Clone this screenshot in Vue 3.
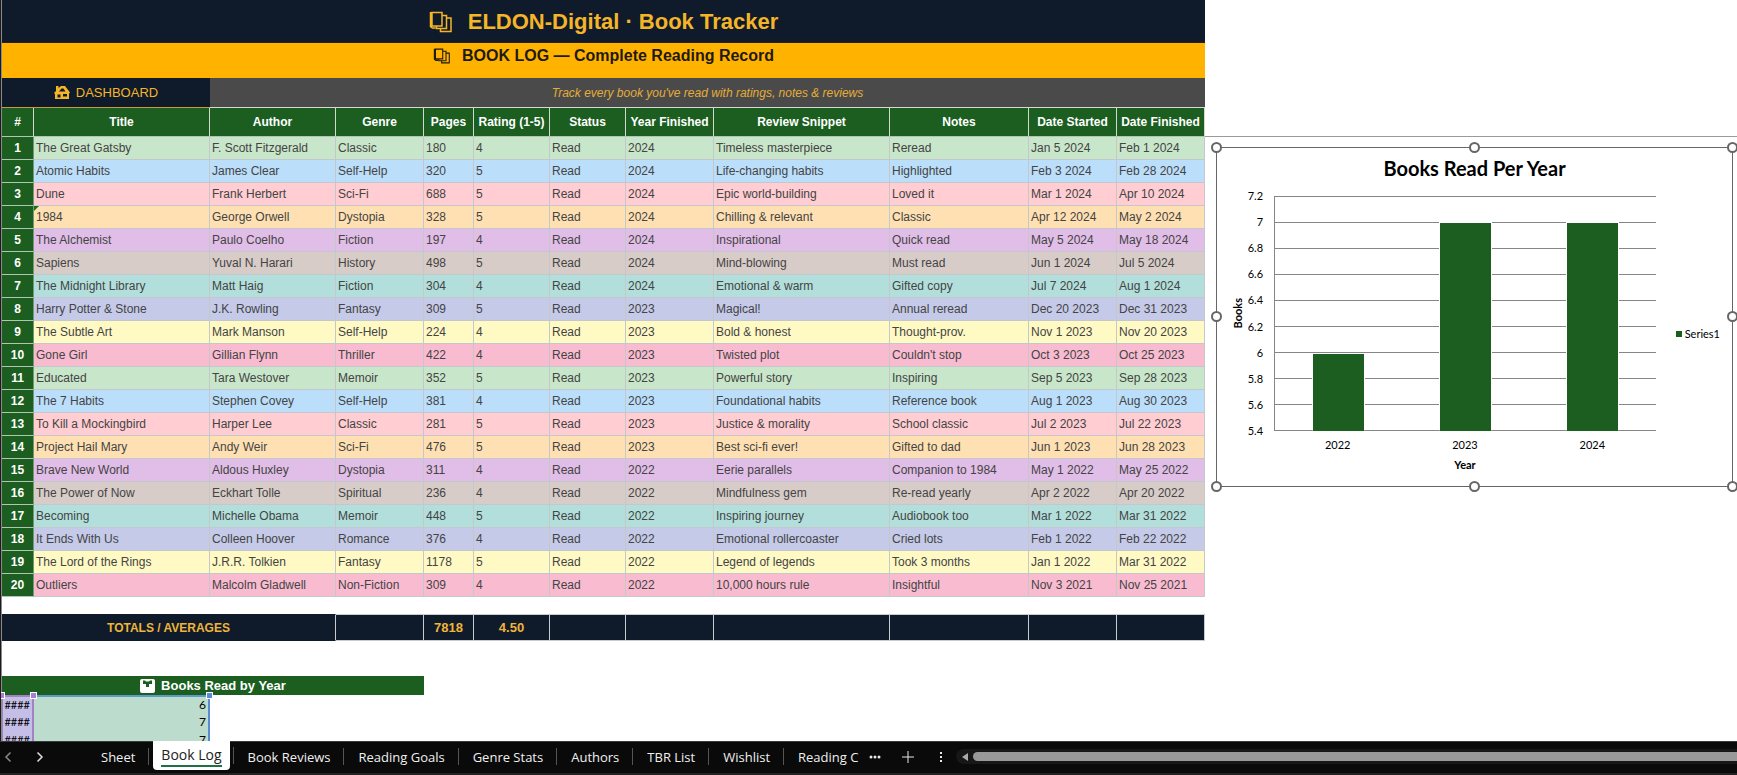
<template>
  <div class="workbook">
    <main class="sheet">
      <table class="log">
        <colgroup>
          <col v-for="c in columns" :key="c.label" :style="{ width: c.width + 'px' }">
        </colgroup>
        <thead>
          <tr class="brand-row">
            <th colspan="12">
              <span class="line">
                <svg class="books" viewBox="0 0 24 22" aria-hidden="true">
                  <path d="M3 1.500h10v13.500H3zM1.500 1v14.500l2 1.500h3M13 4.500h4.500v13h-10V15M17.500 7H22v13.500H11.500v-3" />
                </svg>
                <span>ELDON-Digital · Book Tracker</span>
              </span>
            </th>
          </tr>
          <tr class="heading-row">
            <th colspan="12">
              <span class="line">
                <svg class="books" viewBox="0 0 24 22" aria-hidden="true">
                  <path d="M3 1.500h10v13.500H3zM1.500 1v14.500l2 1.500h3M13 4.500h4.500v13h-10V15M17.500 7H22v13.500H11.500v-3" />
                </svg>
                <span>BOOK LOG — Complete Reading Record</span>
              </span>
            </th>
          </tr>
          <tr class="nav-row">
            <td colspan="2" class="dash">
              <a href="#dashboard" class="line">
                <svg class="house" viewBox="0 0 16 15" aria-hidden="true">
                  <path fill-rule="evenodd" d="M0 8 2 6V1h2.500v2L7 1h4l5 6.500-1 1V14H1V9zM3.500 9.500v3h3v-3zM9 9v2.500h4V9zM7.500 3.500 5 6.500h6.500l-2-3z" />
                </svg>
                <span>DASHBOARD</span>
              </a>
            </td>
            <td colspan="10" class="tagline">Track every book you've read with ratings, notes &amp; reviews</td>
          </tr>
          <tr class="cols-row">
            <th v-for="c in columns" :key="c.label" scope="col">{{ c.label }}</th>
          </tr>
        </thead>
        <tbody>
          <tr v-for="(book, i) in books" :key="i" class="book" :class="'tint-' + (i % 10)">
            <th scope="row">{{ i + 1 }}</th>
            <td v-for="(value, j) in book" :key="j" :class="{ flagged: value === '1984' }">{{ value }}</td>
          </tr>
          <tr class="gap"><td colspan="12"></td></tr>
          <tr class="totals">
            <th colspan="3" scope="row">TOTALS / AVERAGES</th>
            <td></td>
            <td>7818</td>
            <td>4.50</td>
            <td v-for="n in 6" :key="n"></td>
          </tr>
          <tr class="gap wide"><td colspan="12"></td></tr>
          <tr class="year-head">
            <th colspan="4">
              <span class="line">
                <svg class="calendar" viewBox="0 0 15 14" aria-hidden="true">
                  <rect width="15" height="14" rx="2" />
                  <path d="M3 1.500h2l1 1h3l1-1h2V5H9v3H6V5H3z" />
                </svg>
                <span>Books Read by Year</span>
              </span>
            </th>
            <td colspan="8"></td>
          </tr>
          <tr v-for="(y, i) in yearly" :key="y.year" class="year-row" :class="{ first: i === 0 }">
            <td class="key">####<i v-if="i === 0" class="grip start"></i><i v-if="i === 0" class="grip"></i></td>
            <td class="count">{{ y.count }}<i v-if="i === 0" class="grip"></i></td>
            <td colspan="10"></td>
          </tr>
        </tbody>
      </table>

      <aside class="side">
        <figure class="chart">
          <figcaption>Books Read Per Year</figcaption>
          <div class="chart-body">
            <div class="y-title"><span>Books</span></div>
            <div class="ticks">
              <span v-for="t in ticks" :key="t">{{ t }}</span>
            </div>
            <div class="plot">
              <div class="gridlines"><i v-for="t in ticks" :key="t"></i></div>
              <div class="bars">
                <div v-for="y in yearly" :key="y.year" class="slot">
                  <div class="bar" :style="{ height: barHeight(y.count) }"></div>
                </div>
              </div>
            </div>
            <div class="legend"><i></i>Series1</div>
            <div class="years">
              <span v-for="y in yearly" :key="y.year">{{ y.year }}</span>
            </div>
            <div class="x-title">Year</div>
          </div>
          <i v-for="h in handles" :key="h" class="handle" :class="h"></i>
        </figure>
      </aside>
    </main>

    <footer class="tabbar">
      <div class="arrows">
        <button type="button" aria-label="Previous sheet" class="dim">
          <svg viewBox="0 0 8 12"><path d="M6.500 1.500 2 6l4.500 4.500" /></svg>
        </button>
        <button type="button" aria-label="Next sheet">
          <svg viewBox="0 0 8 12"><path d="M1.500 1.500 6 6l-4.500 4.500" /></svg>
        </button>
      </div>
      <nav class="tabs">
        <button
          v-for="tab in tabs"
          :key="tab"
          type="button"
          class="tab"
          :class="{ active: tab === current }"
          @click="current = tab"
        ><span>{{ tab }}</span></button>
      </nav>
      <button type="button" class="tool more" aria-label="More sheets">
        <svg viewBox="0 0 12 4"><circle cx="2" cy="2" r="1.500" /><circle cx="6" cy="2" r="1.500" /><circle cx="10" cy="2" r="1.500" /></svg>
      </button>
      <button type="button" class="tool add" aria-label="New sheet">
        <svg viewBox="0 0 12 12"><path d="M6 0v12M0 6h12" /></svg>
      </button>
      <button type="button" class="tool kebab" aria-label="Options">
        <svg viewBox="0 0 4 12"><path d="M1 1h2v2H1zM1 5h2v2H1zM1 9h2v2H1z" /></svg>
      </button>
      <div class="scroll">
        <button type="button" aria-label="Scroll left">
          <svg viewBox="0 0 8 10"><path d="M7 1v8L1 5z" /></svg>
        </button>
        <div class="thumb"></div>
      </div>
    </footer>
  </div>
</template>

<script setup>
import { ref } from 'vue'

const columns = [
  { label: '#', width: 32 },
  { label: 'Title', width: 176 },
  { label: 'Author', width: 126 },
  { label: 'Genre', width: 88 },
  { label: 'Pages', width: 50 },
  { label: 'Rating (1-5)', width: 76 },
  { label: 'Status', width: 76 },
  { label: 'Year Finished', width: 88 },
  { label: 'Review Snippet', width: 176 },
  { label: 'Notes', width: 139 },
  { label: 'Date Started', width: 88 },
  { label: 'Date Finished', width: 88 }
]

const books = [
  ['The Great Gatsby', 'F. Scott Fitzgerald', 'Classic', 180, 4, 'Read', 2024, 'Timeless masterpiece', 'Reread', 'Jan 5 2024', 'Feb 1 2024'],
  ['Atomic Habits', 'James Clear', 'Self-Help', 320, 5, 'Read', 2024, 'Life-changing habits', 'Highlighted', 'Feb 3 2024', 'Feb 28 2024'],
  ['Dune', 'Frank Herbert', 'Sci-Fi', 688, 5, 'Read', 2024, 'Epic world-building', 'Loved it', 'Mar 1 2024', 'Apr 10 2024'],
  ['1984', 'George Orwell', 'Dystopia', 328, 5, 'Read', 2024, 'Chilling & relevant', 'Classic', 'Apr 12 2024', 'May 2 2024'],
  ['The Alchemist', 'Paulo Coelho', 'Fiction', 197, 4, 'Read', 2024, 'Inspirational', 'Quick read', 'May 5 2024', 'May 18 2024'],
  ['Sapiens', 'Yuval N. Harari', 'History', 498, 5, 'Read', 2024, 'Mind-blowing', 'Must read', 'Jun 1 2024', 'Jul 5 2024'],
  ['The Midnight Library', 'Matt Haig', 'Fiction', 304, 4, 'Read', 2024, 'Emotional & warm', 'Gifted copy', 'Jul 7 2024', 'Aug 1 2024'],
  ['Harry Potter & Stone', 'J.K. Rowling', 'Fantasy', 309, 5, 'Read', 2023, 'Magical!', 'Annual reread', 'Dec 20 2023', 'Dec 31 2023'],
  ['The Subtle Art', 'Mark Manson', 'Self-Help', 224, 4, 'Read', 2023, 'Bold & honest', 'Thought-prov.', 'Nov 1 2023', 'Nov 20 2023'],
  ['Gone Girl', 'Gillian Flynn', 'Thriller', 422, 4, 'Read', 2023, 'Twisted plot', "Couldn't stop", 'Oct 3 2023', 'Oct 25 2023'],
  ['Educated', 'Tara Westover', 'Memoir', 352, 5, 'Read', 2023, 'Powerful story', 'Inspiring', 'Sep 5 2023', 'Sep 28 2023'],
  ['The 7 Habits', 'Stephen Covey', 'Self-Help', 381, 4, 'Read', 2023, 'Foundational habits', 'Reference book', 'Aug 1 2023', 'Aug 30 2023'],
  ['To Kill a Mockingbird', 'Harper Lee', 'Classic', 281, 5, 'Read', 2023, 'Justice & morality', 'School classic', 'Jul 2 2023', 'Jul 22 2023'],
  ['Project Hail Mary', 'Andy Weir', 'Sci-Fi', 476, 5, 'Read', 2023, 'Best sci-fi ever!', 'Gifted to dad', 'Jun 1 2023', 'Jun 28 2023'],
  ['Brave New World', 'Aldous Huxley', 'Dystopia', 311, 4, 'Read', 2022, 'Eerie parallels', 'Companion to 1984', 'May 1 2022', 'May 25 2022'],
  ['The Power of Now', 'Eckhart Tolle', 'Spiritual', 236, 4, 'Read', 2022, 'Mindfulness gem', 'Re-read yearly', 'Apr 2 2022', 'Apr 20 2022'],
  ['Becoming', 'Michelle Obama', 'Memoir', 448, 5, 'Read', 2022, 'Inspiring journey', 'Audiobook too', 'Mar 1 2022', 'Mar 31 2022'],
  ['It Ends With Us', 'Colleen Hoover', 'Romance', 376, 4, 'Read', 2022, 'Emotional rollercoaster', 'Cried lots', 'Feb 1 2022', 'Feb 22 2022'],
  ['The Lord of the Rings', 'J.R.R. Tolkien', 'Fantasy', 1178, 5, 'Read', 2022, 'Legend of legends', 'Took 3 months', 'Jan 1 2022', 'Mar 31 2022'],
  ['Outliers', 'Malcolm Gladwell', 'Non-Fiction', 309, 4, 'Read', 2022, '10,000 hours rule', 'Insightful', 'Nov 3 2021', 'Nov 25 2021']
]

const yearly = [
  { year: 2022, count: 6 },
  { year: 2023, count: 7 },
  { year: 2024, count: 7 }
]

// value axis
const ticks = [7.2, 7, 6.8, 6.6, 6.4, 6.2, 6, 5.8, 5.6, 5.4]
const barHeight = (v) => ((v - 5.4) / (7.2 - 5.4)) * 100 + '%'

const handles = ['tl', 'tc', 'tr', 'ml', 'mr', 'bl', 'bc', 'br']

const tabs = ['Sheet', 'Book Log', 'Book Reviews', 'Reading Goals', 'Genre Stats', 'Authors', 'TBR List', 'Wishlist', 'Reading C']
const current = ref('Book Log')
</script>

<style>
body { background: #fff; overflow: hidden; }
</style>

<style scoped>
.workbook {
  height: 100vh;
  display: flex;
  flex-direction: column;
  font-family: "Liberation Sans", Arial, sans-serif;
  font-size: 12px;
  color: #000;
}
button { border: 0; padding: 0; background: none; font: inherit; color: inherit; cursor: pointer; }
svg { display: block; }

/* sheet */
.sheet {
  flex: 1;
  min-height: 0;
  display: flex;
  align-items: flex-start;
  overflow: hidden;
  border-left: 1px solid #1a1a1a;
}
.log {
  flex: none;
  width: 1204px;
  table-layout: fixed;
  border-collapse: separate;
  border-spacing: 0;
  border-left: 1px solid #8a8a8a;
}
.log th, .log td {
  box-sizing: border-box;
  padding: 0;
  line-height: 16px;
  white-space: nowrap;
}
.line { display: flex; align-items: center; justify-content: center; }

.brand-row th { height: 43px; background: #0f1b2a; color: #f5b529; font-size: 22px; border-bottom: 1px solid #2a2010; }
.brand-row .line { gap: 15px; padding-top: 2px; line-height: 24px; }
.books { width: 24px; height: 22px; fill: none; stroke: currentColor; stroke-width: 1.5; }
.heading-row th { height: 35px; background: #ffb300; color: #1f1a10; font-size: 16px; vertical-align: top; }
.heading-row .line { gap: 11px; padding-top: 5px; }
.heading-row .books { width: 18px; height: 16px; }
.nav-row td { height: 30px; border-bottom: 1px solid #d8d8d8; }
.nav-row .dash { background: #0f1b2a; border-bottom-color: #c99a3c; }
.dash a { gap: 6px; color: #f5b529; font-size: 13px; text-decoration: none; }
.house { width: 16px; height: 15px; fill: currentColor; }
.nav-row .tagline { background: #4a4a4a; color: #e5ad38; font-style: italic; text-align: center; }

.cols-row th {
  height: 29px;
  background: #1b5e20;
  color: #fff;
  border-right: 1px solid #d0d8d0;
  border-bottom: 1px solid #b4c4b4;
}

.book th, .book td { height: 23px; border-right: 1px solid #c4c8cc; border-bottom: 1px solid #c4c8cc; }
.book th { background: #1b5e20; color: #fff; border-right-color: #6f9a72; border-bottom-color: #b4c4b4; }
.book td { padding-left: 2px; color: #444; }
.flagged { position: relative; }
.flagged::before {
  content: "";
  position: absolute;
  left: 0;
  top: 0;
  border-top: 5px solid #1b6e20;
  border-right: 5px solid transparent;
}
.tint-0 td { background: #c8e6c9; }
.tint-1 td { background: #bbdefb; }
.tint-2 td { background: #ffcdd2; }
.tint-3 td { background: #ffe0b2; }
.tint-4 td { background: #e1bee7; }
.tint-5 td { background: #d7ccc8; }
.tint-6 td { background: #b2dfdb; }
.tint-7 td { background: #c5cae9; }
.tint-8 td { background: #fff9c4; }
.tint-9 td { background: #f8bbd0; }

.gap td { height: 17px; line-height: 0; }
.gap.wide td { height: 35px; }

.totals th, .totals td {
  height: 27px;
  background: #0f1b2a;
  color: #f0b43a;
  font-weight: bold;
  text-align: center;
  border: 1px solid #c8ccd2;
  border-left: 0;
}
.totals td { font-size: 13px; }
.totals th { border-top-color: #0f1b2a; border-bottom-color: #0f1b2a; }

.year-head th { height: 19px; background: #1b5e20; color: #fff; font-size: 13px; }
.year-head .line { gap: 6px; }
.calendar { width: 15px; height: 14px; fill: #fff; }
.calendar path { fill: #1b5e20; }

.year-row td { height: 18px; position: relative; font-family: Lato, Carlito, sans-serif; }
.year-row .key { font-size: 11px; background: #c5bfe8; text-align: right; padding-right: 2px; border-right: 2px solid #a182c6; border-left: 1px solid #a182c6; }
.year-row .count { background: #bcdccd; text-align: right; padding-right: 2px; border-right: 2px solid #5b8bd0; }
.year-row.first .key { border-top: 2px solid #a182c6; }
.year-row.first .count { border-top: 2px solid #5b9bc4; }
.grip {
  position: absolute;
  right: -4px;
  top: -4px;
  z-index: 1;
  width: 5px;
  height: 5px;
  background: #a97fd6;
  outline: 1px solid #fff;
}
.grip.start { right: auto; left: -4px; }
.count .grip { background: #5b8bd8; }

/* chart */
.side { flex: 1; min-width: 0; margin-top: 136px; padding: 10px 4px 0 11px; border-top: 1px solid #9a9a9a; }
.chart {
  position: relative;
  margin: 0;
  padding: 8px 12px 14px;
  border: 1px solid #666;
  font-family: Lato, Carlito, sans-serif;
  font-size: 11px;
}
figcaption { font-size: 20px; line-height: 24px; font-weight: bold; text-align: center; }
.chart-body {
  display: grid;
  grid-template-columns: 16px 29px 1fr 64px;
  grid-template-rows: 235px 27px 14px;
  padding-top: 16px;
}
.y-title { grid-row: 1; display: flex; align-items: center; justify-content: center; font-weight: bold; }
.y-title span { writing-mode: vertical-rl; transform: rotate(180deg); }
.ticks {
  display: flex;
  flex-direction: column;
  justify-content: space-between;
  margin: -7px 11px -7px 0;
  line-height: 14px;
  text-align: right;
}
.plot { display: grid; border-left: 1px solid #868686; }
.gridlines, .bars { grid-area: 1 / 1; display: flex; }
.gridlines { flex-direction: column; justify-content: space-between; }
.gridlines i { height: 1px; background: #868686; }
.slot { flex: 1; display: flex; align-items: flex-end; justify-content: center; }
.bar { box-sizing: border-box; width: 41%; background: #1b5e20; border: 1px solid #fff; border-bottom-color: #1b5e20; }
.legend { display: flex; align-items: center; justify-content: flex-end; gap: 3px; padding-top: 40px; }
.legend i { width: 6px; height: 6px; background: #1b5e20; }
.years { grid-column: 3; display: flex; align-items: center; }
.years span { flex: 1; text-align: center; }
.x-title { grid-column: 3; font-weight: bold; text-align: center; line-height: 14px; }

.handle {
  position: absolute;
  box-sizing: border-box;
  width: 11px;
  height: 11px;
  margin: -6px;
  border: 2px solid #666;
  border-radius: 50%;
  background: #fff;
}
.tl, .tc, .tr { top: 0; }
.ml, .mr { top: 50%; }
.bl, .bc, .br { bottom: 0; }
.tl, .ml, .bl { left: 0; }
.tc, .bc { left: 50%; }
.tr, .mr, .br { right: 0; }

/* sheet tabs */
.tabbar {
  flex: none;
  box-sizing: border-box;
  height: 34px;
  display: flex;
  align-items: flex-start;
  background: #0a0a0a;
  border-top: 1px solid #3a3a3a;
  border-bottom: 2px solid #222;
  color: #f0f0f0;
  font-family: "Open Sans", "Noto Sans", sans-serif;
  font-size: 13px;
}
.arrows { display: flex; gap: 24px; width: 87px; padding: 9px 0 0 4px; box-sizing: border-box; }
.arrows svg { width: 8px; height: 12px; fill: none; stroke: #ddd; stroke-width: 1.5; }
.arrows .dim svg { stroke: #888; }
.tabs { display: flex; }
.tab { position: relative; height: 28px; padding: 0 14px; white-space: nowrap; line-height: 30px; }
.tab::after { content: ""; position: absolute; right: 0; top: 6px; width: 1px; height: 17px; background: #555; }
.tab:last-child { padding-right: 10px; }
.tab:last-child::after { display: none; }
.tab.active { margin: -1px 4px 0; padding: 0 8px; height: 29px; font-size: 14px; background: #fff; color: #222; border-radius: 0 0 4px 4px; }
.tab.active::after { right: -4px; }
.tab.active span { display: block; line-height: 20px; border-bottom: 2px solid #1e7145; }
.tool { display: flex; align-items: center; justify-content: center; height: 30px; }
.tool svg { fill: #e8e8e8; stroke: none; }
.more { width: 14px; }
.more svg { width: 12px; height: 4px; }
.add { width: 52px; }
.add svg { width: 12px; height: 12px; stroke: #e8e8e8; }
.kebab { width: 14px; }
.kebab svg { width: 4px; height: 12px; }
.scroll { flex: 1; display: flex; align-items: center; gap: 4px; height: 15px; margin: 7px 0 0 8px; padding-left: 5px; background: #171717; border-radius: 8px 0 0 8px; }
.scroll svg { width: 8px; height: 10px; fill: #aaa; }
.thumb { flex: 1; height: 9px; background: #999; border-radius: 5px 0 0 5px; }
</style>
